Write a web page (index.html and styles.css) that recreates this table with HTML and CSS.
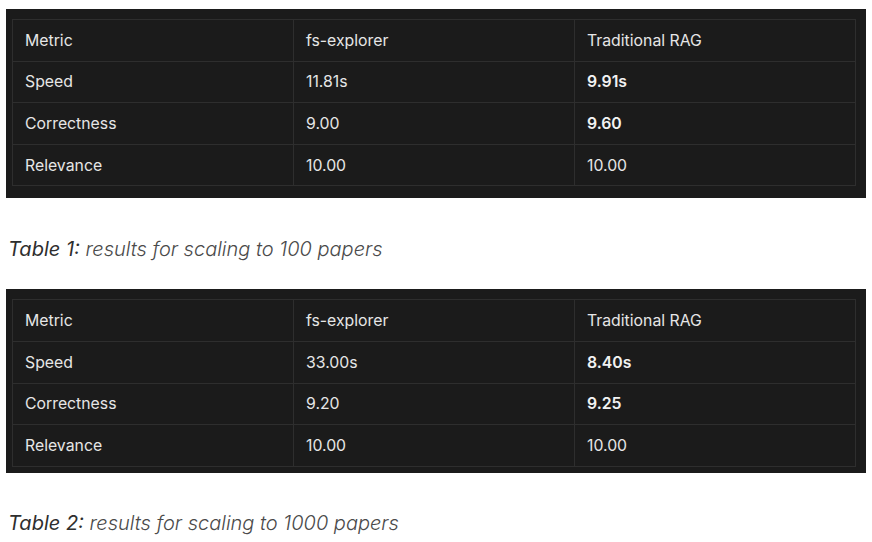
FILE: index.html
```html
<!DOCTYPE html>
<html>
<head>
<meta charset="utf-8">
<link rel="stylesheet" href="styles.css">
</head>
<body>
<div class="page">
  <div class="block block-1">
    <table class="results">
      <tr><td>Metric</td><td>fs-explorer</td><td>Traditional RAG</td></tr>
      <tr><td>Speed</td><td>11.81s</td><td class="best">9.91s</td></tr>
      <tr><td>Correctness</td><td>9.00</td><td class="best">9.60</td></tr>
      <tr><td>Relevance</td><td>10.00</td><td>10.00</td></tr>
    </table>
  </div>
  <p class="caption caption-1"><span class="label">Table 1:</span> results for scaling to 100 papers</p>
  <div class="block block-2">
    <table class="results">
      <tr><td>Metric</td><td>fs-explorer</td><td>Traditional RAG</td></tr>
      <tr><td>Speed</td><td>33.00s</td><td class="best">8.40s</td></tr>
      <tr><td>Correctness</td><td>9.20</td><td class="best">9.25</td></tr>
      <tr><td>Relevance</td><td>10.00</td><td>10.00</td></tr>
    </table>
  </div>
  <p class="caption caption-2"><span class="label">Table 2:</span> results for scaling to 1000 papers</p>
</div>
</body>
</html>
```

FILE: styles.css
```css
html, body {
  margin: 0;
  padding: 0;
  background: #ffffff;
}
.page {
  padding: 9px 6px 0 6px;
  font-family: "Inter", "Liberation Sans", sans-serif;
}
.block {
  background: #1b1b1b;
  padding: 10px 10px 12px 6px;
}
.block-2 {
  padding-bottom: 6px;
}
.results {
  width: 100%;
  border-collapse: collapse;
  table-layout: fixed;
  border: 1px solid #2e2e2e;
}
.results td {
  border: 1px solid #2e2e2e;
  height: 40.6px;
  padding: 0 12px;
  color: #e6e6e6;
  font-size: 15.8px;
  vertical-align: middle;
}
.results td.best {
  font-weight: 600;
  color: #f2f2f2;
}
.caption {
  margin: 0;
  font-size: 20px;
  line-height: 24px;
  font-style: italic;
  font-weight: 300;
  color: #4a4a4a;
  padding-left: 2px;
}
.caption .label {
  color: #2e2e2e;
  font-weight: 400;
}
.caption-1 {
  padding-top: 39px;
  padding-bottom: 28px;
}
.caption-2 {
  padding-top: 38px;
}
```
